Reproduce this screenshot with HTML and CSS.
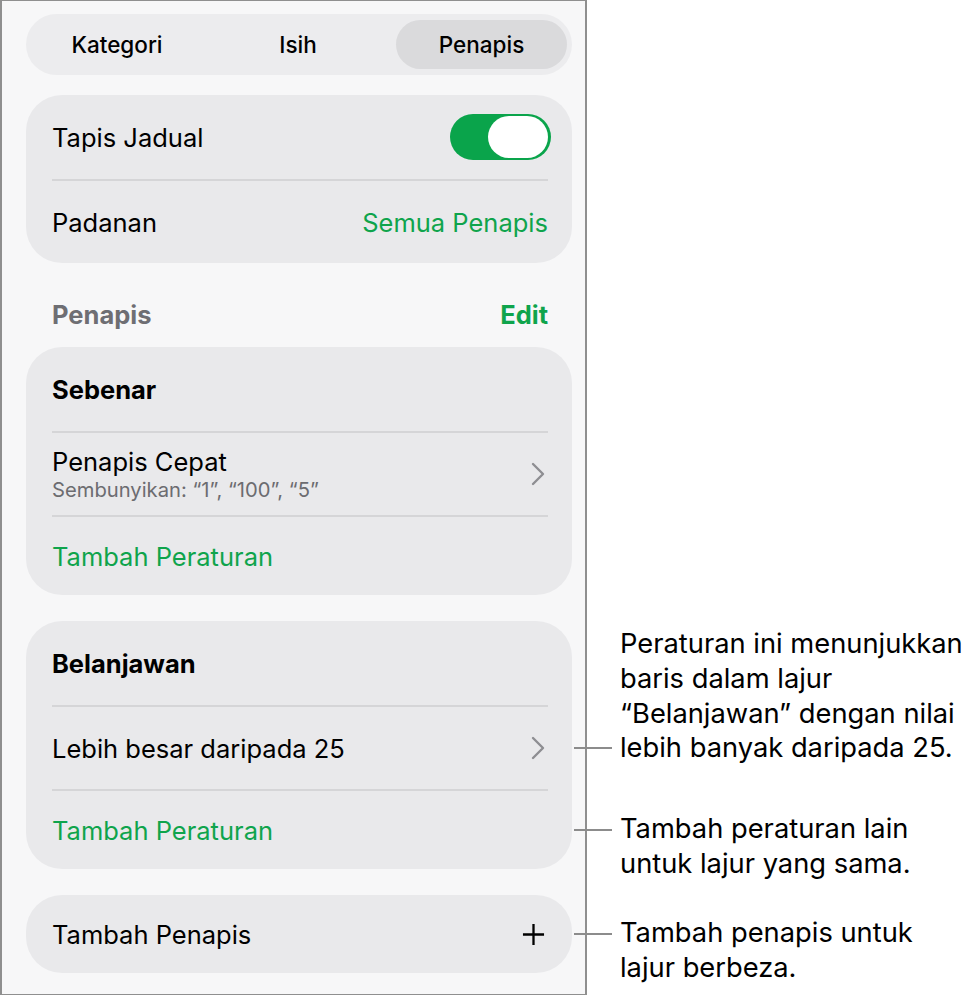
FILE: index.html
```html
<!DOCTYPE html>
<html lang="ms">
<head>
  <meta charset="UTF-8">
  <title>Penapis</title>
  <link rel="stylesheet" href="styles.css">
</head>
<body>
  <div class="panel">
    <div class="segmented">
      <span class="seg">Kategori</span>
      <span class="seg">Isih</span>
      <span class="seg active">Penapis</span>
    </div>

    <div class="card">
      <div class="row">
        <span>Tapis Jadual</span>
        <span class="switch"><span class="knob"></span></span>
      </div>
      <div class="row">
        <span>Padanan</span>
        <span class="link">Semua Penapis</span>
      </div>
    </div>

    <div class="section-head">
      <span>Penapis</span>
      <span class="link">Edit</span>
    </div>

    <div class="card">
      <div class="row title">Sebenar</div>
      <div class="row">
        <div class="stack">
          <span>Penapis Cepat</span>
          <span class="sub">Sembunyikan: “1”, “100”, “5”</span>
        </div>
        <svg class="chevron" viewBox="0 0 14 24"><path d="M2 2 L12 12 L2 22"/></svg>
      </div>
      <div class="row last"><span class="link">Tambah Peraturan</span></div>
    </div>

    <div class="card">
      <div class="row title">Belanjawan</div>
      <div class="row">
        <span>Lebih besar daripada 25</span>
        <svg class="chevron" viewBox="0 0 14 24"><path d="M2 2 L12 12 L2 22"/></svg>
        <div class="note note-last">
          <span class="tick"></span>
          <p>Peraturan ini menunjukkan<br>baris dalam lajur<br>“Belanjawan” dengan nilai<br>lebih banyak daripada 25.</p>
        </div>
      </div>
      <div class="row last">
        <span class="link">Tambah Peraturan</span>
        <div class="note">
          <span class="tick"></span>
          <p>Tambah peraturan lain<br>untuk lajur yang sama.</p>
        </div>
      </div>
    </div>

    <div class="card">
      <div class="row single">
        <span>Tambah Penapis</span>
        <svg class="plus" viewBox="0 0 24 24"><path d="M12 1 V23 M1 12 H23"/></svg>
        <div class="note">
          <span class="tick"></span>
          <p>Tambah penapis untuk<br>lajur berbeza.</p>
        </div>
      </div>
    </div>
  </div>
</body>
</html>
```

FILE: styles.css
```css
body { margin: 0; background: #fff; font-family: Inter, "Noto Sans", sans-serif; color: #000; }

.panel { width: 546px; height: 961px; padding: 13px 13px 19px 24px; background: #f7f7f8; border: 2px solid #8f8f8f; border-top-width: 1px; }

.segmented { display: grid; grid-template-columns: 172px 190px 174px; height: 49px; padding: 6px 5px; background: #ececee; border-radius: 31px; }
.seg { display: flex; align-items: center; justify-content: center; font-size: 22.5px; font-weight: 500; border-radius: 25px; }
.seg.active { margin-left: 3px; background: #dadadc; }

.card { background: #e9e9eb; border-radius: 36px; margin-top: 20px; }
.card + .card { margin-top: 26px; }
.section-head + .card { margin-top: 17px; }
.row { position: relative; display: flex; align-items: center; justify-content: space-between; height: 84px; margin: 0 24px 0 26px; font-size: 25.5px; }
.row + .row { border-top: 2px solid #d5d5d7; height: 82px; }
.row.last { height: 78px; }
.row.single { height: 78px; }
.row.title { font-weight: 700; }

.stack { display: flex; flex-direction: column; gap: 0; }
.sub { font-size: 20.2px; color: #6c6c70; }
.link { color: #0fa44c; }

.switch { position: relative; width: 101px; height: 46px; margin-right: -3px; background: #0aa44b; border-radius: 23px; }
.knob { position: absolute; right: 3px; top: 2px; width: 60px; height: 42px; background: #fff; border-radius: 21px; }

.chevron { width: 14px; height: 24px; margin-right: 3px; fill: none; stroke: #8e8e92; stroke-width: 2.4; stroke-linecap: round; stroke-linejoin: round; }
.plus { width: 23px; height: 23px; margin-right: 3px; fill: none; stroke: #000; stroke-width: 2.4; }

.section-head { display: flex; justify-content: space-between; align-items: flex-end; height: 67px; margin: 0 24px 0 26px; font-size: 25.5px; font-weight: 700; color: #6e6e73; }

/* callouts hang off the right edge of the card */
.note { position: absolute; left: calc(100% + 26px); top: calc(50% - 18px); display: flex; align-items: flex-start; color: #000; }
.note p { margin: 0; font-size: 27.3px; line-height: 34.7px; white-space: nowrap; }
.tick { flex: none; width: 38px; height: 2px; margin: 17px 8px 0 0; background: #8c8c8c; }
.note-last { top: auto; bottom: calc(50% - 18px); align-items: flex-end; }
.note-last .tick { margin: 0 8px 17px 0; }
```
